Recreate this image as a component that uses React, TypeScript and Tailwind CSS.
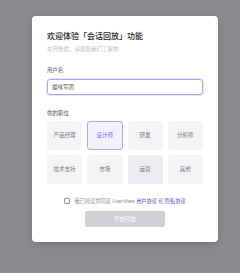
import { useState } from "react";

const roles = ["产品经理", "设计师", "研发", "分析师", "技术支持", "市场", "运营", "其他"];

export default function App() {
    const [name, setName] = useState("猫咪军团");
    const [role, setRole] = useState("设计师");
    const [agreed, setAgreed] = useState(false);

    return (
        <div
            className="w-[240px] h-[273px] bg-[#8b8b8f] pt-[16px] pl-[32px]"
            style={{ fontFamily: '"Noto Sans", "Noto Sans CJK SC", sans-serif' }}
        >
            <div className="w-[186px] h-[226px] bg-white rounded-[4px] shadow-[0_2px_6px_rgba(0,0,0,0.15)] px-[15px] pt-[14px] flex flex-col">
                <h1 className="text-[8px] leading-[12px] font-medium text-[#1f1f23]">欢迎体验「会话回放」功能</h1>
                <p className="mt-[4px] text-[5.5px] leading-[6px] text-[#bcbcc0]">在开始前，请帮助我们了解你</p>

                <label className="mt-[15px] text-[5.5px] leading-[6px] text-[#55555a]">用户名</label>
                <input
                    value={name}
                    onChange={(e) => setName(e.target.value)}
                    className="mt-[6px] h-[16px] w-full rounded-[3px] border border-[#b3a2f4] shadow-[0_0_0_1px_#ece6fd] px-[4px] text-[5.5px] text-[#55555a] outline-none caret-[#333]"
                />

                <div className="mt-[15px] text-[5.5px] leading-[6px] text-[#55555a]">你的职位</div>
                <div className="mt-[5px] grid grid-cols-4 gap-[5px]">
                    {roles.map((r) => {
                        const active = r === role;
                        const hovered = r === "运营";
                        return (
                            <button
                                key={r}
                                onClick={() => setRole(r)}
                                className={
                                    active
                                        ? "h-[29px] rounded-[3px] border border-[#b6a3f7] bg-[#f3f0ff] text-[5.5px] text-[#7c5ce8]"
                                        : hovered
                                          ? "h-[29px] rounded-[3px] bg-[#ececf0] text-[5.5px] text-[#77777c]"
                                          : "h-[29px] rounded-[3px] bg-[#f4f4f7] text-[5.5px] text-[#77777c]"
                                }
                            >
                                {r}
                            </button>
                        );
                    })}
                </div>

                <div className="mt-[13px] h-[8px] flex items-center justify-center gap-[4px]">
                    <button
                        onClick={() => setAgreed(!agreed)}
                        className="w-[6px] h-[6px] rounded-[1px] border border-[#9a9aa0] bg-white"
                    />
                    <span className="text-[5.2px] leading-[6px] text-[#8a8a90] whitespace-nowrap">
                        我已阅读并同意 UserView <span className="text-[#5b45d6]">用户协议</span> 和{" "}
                        <span className="text-[#5b45d6]">隐私协议</span>
                    </span>
                </div>

                <div className="mt-[6px] flex justify-center">
                    <button
                        disabled={!agreed}
                        className="w-[80px] h-[16px] rounded-[2px] bg-[#cfd0d4] text-[5.5px] text-white"
                    >
                        开始回放
                    </button>
                </div>
            </div>
        </div>
    );
}
